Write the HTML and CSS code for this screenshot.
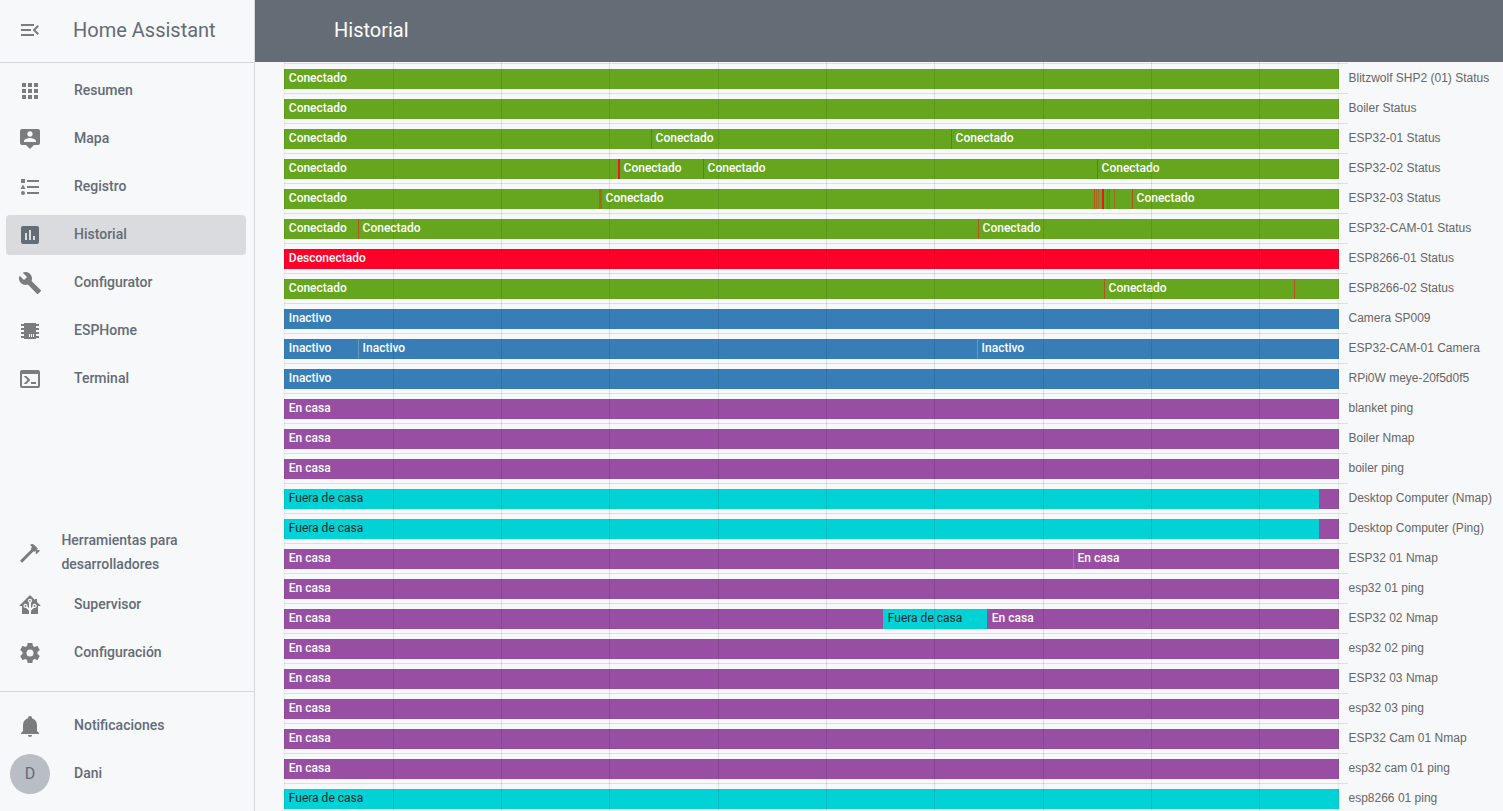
FILE: index.html
```html
<!DOCTYPE html>
<html lang="es">
<head>
<meta charset="utf-8">
<title>Historial - Home Assistant</title>
<link rel="stylesheet" href="styles.css">
</head>
<body>
<div class="app">
<aside class="sidebar">
  <div class="brand"><svg class="icon" viewBox="0 0 24 24"><path d="M21,15.61L19.59,17L14.58,12L19.59,7L21,8.39L17.44,12L21,15.61M3,6H16V8H3V6M3,13V11H13V13H3M3,18V16H16V18H3Z"/></svg><span class="brand-name">Home Assistant</span></div>
  <nav class="nav">
    <a class="item"><svg class="icon" viewBox="0 0 24 24"><path d="M16,20H20V16H16M16,14H20V10H16M10,8H14V4H10M16,8H20V4H16M10,14H14V10H10M4,14H8V10H4M4,20H8V16H4M10,20H14V16H10M4,8H8V4H4V8Z"/></svg><span>Resumen</span></a>
    <a class="item"><svg class="icon" viewBox="0 0 24 24"><path d="M20,2H4A2,2 0 0,0 2,4V16A2,2 0 0,0 4,18H8L12,22L16,18H20A2,2 0 0,0 22,16V4A2,2 0 0,0 20,2M12,4.3C13.5,4.3 14.7,5.5 14.7,7C14.7,8.5 13.5,9.7 12,9.7C10.5,9.7 9.3,8.5 9.3,7C9.3,5.5 10.5,4.3 12,4.3M18,15H6V14.1C6,12.1 10,11 12,11C14,11 18,12.1 18,14.1V15Z"/></svg><span>Mapa</span></a>
    <a class="item"><svg class="icon" viewBox="0 0 24 24"><path d="M5,9.5L7.5,14H2.5L5,9.5M3,4H7V8H3V4M5,20A2,2 0 0,0 7,18A2,2 0 0,0 5,16A2,2 0 0,0 3,18A2,2 0 0,0 5,20M9,5V7H21V5H9M9,19H21V17H9V19M9,13H21V11H9V13Z"/></svg><span>Registro</span></a>
    <a class="item active"><svg class="icon" viewBox="0 0 24 24"><path d="M17,17H15V13H17M13,17H11V7H13M9,17H7V10H9M19,3H5C3.89,3 3,3.89 3,5V19A2,2 0 0,0 5,21H19A2,2 0 0,0 21,19V5C21,3.89 20.1,3 19,3Z"/></svg><span>Historial</span></a>
    <a class="item"><svg class="icon" viewBox="0 0 24 24"><path d="M22.7,19L13.6,9.9C14.5,7.6 14,4.9 12.1,3C10.1,1 7.1,0.6 4.7,1.7L9,6L6,9L1.6,4.7C0.4,7.1 0.9,10.1 2.9,12.1C4.8,14 7.5,14.5 9.8,13.6L18.9,22.7C19.3,23.1 19.9,23.1 20.3,22.7L22.6,20.4C23.1,20 23.1,19.3 22.7,19Z"/></svg><span>Configurator</span></a>
    <a class="item"><svg class="icon" viewBox="0 0 24 24"><path fill-rule="evenodd" d="M6,4H18V5H21V7H18V9H21V11H18V13H21V15H18V17H21V19H18V20H6V19H3V17H6V15H3V13H6V11H3V9H6V7H3V5H6V4M11,15V18H12V15H11M13,15V18H14V15H13M15,15V18H16V15H15Z"/></svg><span>ESPHome</span></a>
    <a class="item"><svg class="icon" viewBox="0 0 24 24"><path d="M20,19V7H4V19H20M20,3A2,2 0 0,1 22,5V19A2,2 0 0,1 20,21H4A2,2 0 0,1 2,19V5C2,3.89 2.9,3 4,3H20M13,17V15H18V17H13M9.58,13L5.57,9H8.4L11.7,12.3C12.09,12.69 12.09,13.33 11.7,13.72L8.42,17H5.59L9.58,13Z"/></svg><span>Terminal</span></a>
  </nav>
  <nav class="nav nav-tools">
    <a class="item wrap"><svg class="icon" viewBox="0 0 24 24"><path d="M2,19.63L13.43,8.2L12.72,7.5L14.14,6.07L12,3.89C13.2,2.7 15.09,2.7 16.27,3.89L19.87,7.5L18.45,8.91H21.29L22,9.62L18.45,13.21L17.74,12.5V9.62L16.27,11.04L15.56,10.33L4.13,21.76L2,19.63Z"/></svg><span>Herramientas para desarrolladores</span></a>
    <a class="item"><svg class="icon" viewBox="0 0 24 24"><path d="M21.8,13H20V21H13V17.67L15.79,14.88L16.5,15C17.66,15 18.6,14.06 18.6,12.9C18.6,11.74 17.66,10.8 16.5,10.8A2.1,2.1 0 0,0 14.4,12.9L14.5,13.61L13,15.13V9.65C13.66,9.29 14.1,8.6 14.1,7.8A2.1,2.1 0 0,0 12,5.7A2.1,2.1 0 0,0 9.9,7.8C9.9,8.6 10.34,9.29 11,9.65V15.13L9.5,13.61L9.6,12.9A2.1,2.1 0 0,0 7.5,10.8A2.1,2.1 0 0,0 5.4,12.9A2.1,2.1 0 0,0 7.5,15L8.21,14.88L11,17.67V21H4V13H2.25C1.83,13 1.42,13 1.42,12.79C1.43,12.57 1.85,12.15 2.28,11.72L11,3C11.33,2.67 11.67,2.33 12,2.33C12.33,2.33 12.67,2.67 13,3L17,7V6H19V9L21.78,11.78C22.18,12.18 22.59,12.59 22.6,12.8C22.6,13 22.2,13 21.8,13M7.5,12A0.9,0.9 0 0,1 8.4,12.9A0.9,0.9 0 0,1 7.5,13.8A0.9,0.9 0 0,1 6.6,12.9A0.9,0.9 0 0,1 7.5,12M16.5,12C17,12 17.4,12.4 17.4,12.9C17.4,13.4 17,13.8 16.5,13.8A0.9,0.9 0 0,1 15.6,12.9A0.9,0.9 0 0,1 16.5,12M12,6.9C12.5,6.9 12.9,7.3 12.9,7.8C12.9,8.3 12.5,8.7 12,8.7C11.5,8.7 11.1,8.3 11.1,7.8C11.1,7.3 11.5,6.9 12,6.9Z"/></svg><span>Supervisor</span></a>
    <a class="item"><svg class="icon" viewBox="0 0 24 24"><path d="M12,15.5A3.5,3.5 0 0,1 8.5,12A3.5,3.5 0 0,1 12,8.5A3.5,3.5 0 0,1 15.5,12A3.5,3.5 0 0,1 12,15.5M19.43,12.97C19.47,12.65 19.5,12.33 19.5,12C19.5,11.67 19.47,11.34 19.43,11L21.54,9.37C21.73,9.22 21.78,8.95 21.66,8.73L19.66,5.27C19.54,5.05 19.27,4.96 19.05,5.05L16.56,6.05C16.04,5.66 15.5,5.32 14.87,5.07L14.5,2.42C14.46,2.18 14.25,2 14,2H10C9.75,2 9.54,2.18 9.5,2.42L9.13,5.07C8.5,5.32 7.96,5.66 7.44,6.05L4.95,5.05C4.73,4.96 4.46,5.05 4.34,5.27L2.34,8.73C2.21,8.95 2.27,9.22 2.46,9.37L4.57,11C4.53,11.34 4.5,11.67 4.5,12C4.5,12.33 4.53,12.65 4.57,12.97L2.46,14.63C2.27,14.78 2.21,15.05 2.34,15.27L4.34,18.73C4.46,18.95 4.73,19.03 4.95,18.95L7.44,17.94C7.96,18.34 8.5,18.68 9.13,18.93L9.5,21.58C9.54,21.82 9.75,22 10,22H14C14.25,22 14.46,21.82 14.5,21.58L14.87,18.93C15.5,18.67 16.04,18.34 16.56,17.94L19.05,18.95C19.27,19.03 19.54,18.95 19.66,18.73L21.66,15.27C21.78,15.05 21.73,14.78 21.54,14.63L19.43,12.97Z"/></svg><span>Configuración</span></a>
  </nav>
  <nav class="nav nav-user">
    <a class="item"><svg class="icon" viewBox="0 0 24 24"><path d="M21,19V20H3V19L5,17V11C5,7.9 7.03,5.17 10,4.29C10,4.19 10,4.1 10,4A2,2 0 0,1 12,2A2,2 0 0,1 14,4C14,4.1 14,4.19 14,4.29C16.97,5.17 19,7.9 19,11V17L21,19M14,21A2,2 0 0,1 12,23A2,2 0 0,1 10,21"/></svg><span>Notificaciones</span></a>
    <a class="item user"><b class="avatar">D</b><span>Dani</span></a>
  </nav>
</aside>
<main class="main">
  <header class="topbar">Historial</header>
  <section class="chart">
    <div class="row"><div class="track on"><i class="seg">Conectado</i></div><span class="name">Blitzwolf SHP2 (01) Status</span></div>
    <div class="row"><div class="track on"><i class="seg">Conectado</i></div><span class="name">Boiler Status</span></div>
    <div class="row"><div class="track on"><i class="seg" style="width:367px">Conectado</i><i class="cut"></i><i class="seg" style="width:299px">Conectado</i><i class="cut"></i><i class="seg">Conectado</i></div><span class="name">ESP32-01 Status</span></div>
    <div class="row"><div class="track on"><i class="seg" style="width:334px">Conectado</i><i class="cut strong"></i><i class="seg" style="width:83px">Conectado</i><i class="cut"></i><i class="seg" style="width:393px">Conectado</i><i class="cut"></i><i class="seg">Conectado</i></div><span class="name">ESP32-02 Status</span></div>
    <div class="row"><div class="track on"><i class="seg" style="width:315px">Conectado</i><i class="cut soft"></i><i class="cut soft"></i><i class="cut soft"></i><i class="seg" style="width:492px">Conectado</i><i class="cut"></i><i class="cut soft gap"></i><i class="cut soft gap"></i><i class="cut strong gap3"></i><i class="cut soft gap3"></i><i class="cut soft gap"></i><i class="cut soft gap4"></i><i class="cut gap17"></i><i class="seg">Conectado</i></div><span class="name">ESP32-03 Status</span></div>
    <div class="row"><div class="track on"><i class="seg" style="width:74px">Conectado</i><i class="cut"></i><i class="seg" style="width:619px">Conectado</i><i class="cut"></i><i class="seg">Conectado</i></div><span class="name">ESP32-CAM-01 Status</span></div>
    <div class="row"><div class="track off"><i class="seg">Desconectado</i></div><span class="name">ESP8266-01 Status</span></div>
    <div class="row"><div class="track on"><i class="seg" style="width:820px">Conectado</i><i class="cut"></i><i class="seg" style="width:189px">Conectado</i><i class="cut"></i><i class="seg"></i></div><span class="name">ESP8266-02 Status</span></div>
    <div class="row"><div class="track idle"><i class="seg">Inactivo</i></div><span class="name">Camera SP009</span></div>
    <div class="row"><div class="track idle"><i class="seg" style="width:74px">Inactivo</i><i class="cut pale"></i><i class="seg" style="width:618px">Inactivo</i><i class="cut pale"></i><i class="seg">Inactivo</i></div><span class="name">ESP32-CAM-01 Camera</span></div>
    <div class="row"><div class="track idle"><i class="seg">Inactivo</i></div><span class="name">RPi0W meye-20f5d0f5</span></div>
    <div class="row"><div class="track home"><i class="seg">En casa</i></div><span class="name">blanket ping</span></div>
    <div class="row"><div class="track home"><i class="seg">En casa</i></div><span class="name">Boiler Nmap</span></div>
    <div class="row"><div class="track home"><i class="seg">En casa</i></div><span class="name">boiler ping</span></div>
    <div class="row"><div class="track home"><i class="seg away" style="width:1035px">Fuera de casa</i></div><span class="name">Desktop Computer (Nmap)</span></div>
    <div class="row"><div class="track home"><i class="seg away" style="width:1035px">Fuera de casa</i></div><span class="name">Desktop Computer (Ping)</span></div>
    <div class="row"><div class="track home"><i class="seg" style="width:789px">En casa</i><i class="cut blue"></i><i class="seg">En casa</i></div><span class="name">ESP32 01 Nmap</span></div>
    <div class="row"><div class="track home"><i class="seg">En casa</i></div><span class="name">esp32 01 ping</span></div>
    <div class="row"><div class="track home"><i class="seg" style="width:599px">En casa</i><i class="seg away" style="width:104px">Fuera de casa</i><i class="seg">En casa</i></div><span class="name">ESP32 02 Nmap</span></div>
    <div class="row"><div class="track home"><i class="seg">En casa</i></div><span class="name">esp32 02 ping</span></div>
    <div class="row"><div class="track home"><i class="seg">En casa</i></div><span class="name">ESP32 03 Nmap</span></div>
    <div class="row"><div class="track home"><i class="seg">En casa</i></div><span class="name">esp32 03 ping</span></div>
    <div class="row"><div class="track home"><i class="seg">En casa</i></div><span class="name">ESP32 Cam 01 Nmap</span></div>
    <div class="row"><div class="track home"><i class="seg">En casa</i></div><span class="name">esp32 cam 01 ping</span></div>
    <div class="row"><div class="track home"><i class="seg away" style="width:1055px">Fuera de casa</i></div><span class="name">esp8266 01 ping</span></div>
    <div class="grid"><i class="edge" style="left:0"></i><i style="left:109px"></i><i style="left:217px"></i><i style="left:325px"></i><i style="left:434px"></i><i style="left:542px"></i><i style="left:650px"></i><i style="left:759px"></i><i style="left:867px"></i><i style="left:975px"></i><i class="edge" style="left:1054px"></i></div>
  </section>
</main>
</div>
</body>
</html>
```
FILE: styles.css
```css
* { box-sizing: border-box; }
body { margin: 0; background: #f7f8fa; font-family: Roboto, sans-serif; color: #646c75; overflow: hidden; }
.app { display: flex; width: 1503px; height: 811px; }

.sidebar { display: flex; flex-direction: column; width: 255px; border-right: 1px solid #d5d8db; }
.brand { display: flex; align-items: center; height: 63px; padding: 0 18px 2px; border-bottom: 1px solid #d5d8db; }
.brand-name { margin-left: 31px; font-size: 20px; line-height: 24px; }
.icon { flex: none; width: 24px; height: 24px; fill: #7a7c7e; }
.nav { display: flex; flex-direction: column; gap: 8px; padding: 8px 8px 0 6px; }
.item { display: flex; align-items: center; height: 40px; padding-left: 12px; border-radius: 4px; font-size: 14px; font-weight: 500; line-height: 24px; }
.item span { margin: -2px 0 0 32px; }
.active { background: #d9dbde; }
.active .icon { fill: #646c75; }
.nav-tools { margin-top: auto; padding-bottom: 18px; }
.wrap { height: 50px; padding-top: 2px; }
.wrap span { width: 150px; margin: -2px 0 0 19.4px; }
.nav-user { height: 120px; padding-top: 14px; border-top: 1px solid #d5d8db; }
.user { padding-left: 4px; }
.avatar { width: 40px; height: 40px; border-radius: 50%; background: #b9bec5; font-size: 16px; font-weight: 400; line-height: 40px; text-align: center; }
.user span { margin-left: 24px; }

.main { flex: 1; min-width: 0; height: 811px; overflow: hidden; }
.topbar { height: 62px; padding: 18px 0 0 79px; background: #646c75; color: #fff; font-size: 20px; line-height: 24px; }
.chart { position: relative; z-index: 0; padding: 1px 0 0 29px; }
.row { display: flex; height: 30px; background: linear-gradient(#dcdee1, #dcdee1) 0 0 / 1064px 1px no-repeat; }
.track { display: flex; width: 1055px; height: 20px; margin-top: 6px; font-size: 12px; font-weight: 500; line-height: 18px; color: #fff; }
.seg { flex: none; padding-left: 4.8px; font-style: normal; white-space: nowrap; }
.cut + .seg { padding-left: 3.6px; }
.on { background: #66a61e; }
.off { background: #ff0029; }
.idle { background: #377eb8; }
.home { background: #984ea3; }
.away { background: #00d2d5; color: #1c2b2c; font-weight: 400; }
.cut { flex: none; width: 1px; background: #b55322; }
.soft { background: #a06a20; }
.strong { width: 2px; background: #f01228; }
.pale { background: #7197b5; }
.blue { background: #5b8fd0; }
.gap { margin-left: 1px; }
.gap3 { margin-left: 3px; }
.gap4 { margin-left: 4px; }
.gap17 { margin-left: 17px; }
.name { margin: 6px 0 0 9.5px; font: 12px/18px "Liberation Sans", Arial, sans-serif; color: #666; white-space: nowrap; }
.grid { position: absolute; inset: 0 0 0 29px; pointer-events: none; }
.grid i { position: absolute; top: 0; bottom: 0; width: 1px; background: rgba(0, 0, 0, .1); }
.grid .edge { background: rgba(0, 0, 0, .06); }
```
